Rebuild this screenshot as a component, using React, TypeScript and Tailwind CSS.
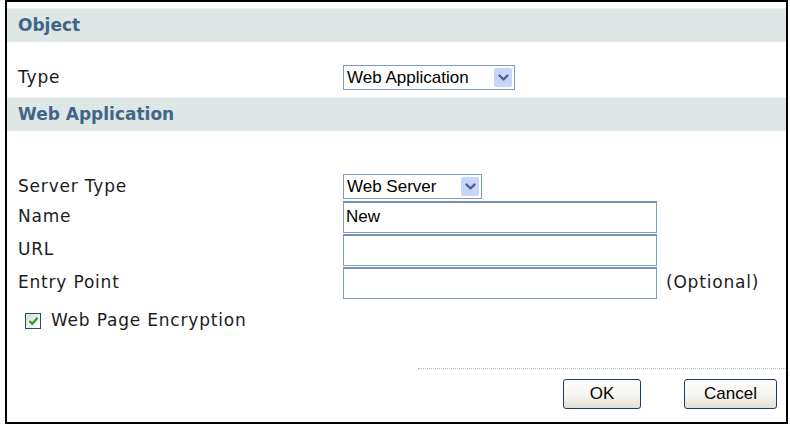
import React from 'react';

const labelFont = "font-['DejaVu_Sans',Verdana,sans-serif] text-[17px] tracking-[0.8px] text-[#1c1c1c]";
const fieldFont = "font-['Liberation_Sans',Arial,sans-serif] text-[17px] text-black";

function Chevron() {
  return (
    <svg width="11" height="8" viewBox="0 0 11 8" fill="none">
      <path d="M1.5 1.5 L5.5 5.5 L9.5 1.5" stroke="#4d6185" strokeWidth="2.4" strokeLinecap="round" strokeLinejoin="round" />
    </svg>
  );
}

function SelectBox({ value, width }: { value: string; width: string }) {
  return (
    <div className={`${width} h-[25px] flex items-center justify-between border border-[#7f9db9] bg-white pl-[3px] pr-[2px]`}>
      <span className={fieldFont}>{value}</span>
      <span className="w-[18px] h-[19px] rounded-[2px] bg-[#c6d6fb] flex items-center justify-center">
        <Chevron />
      </span>
    </div>
  );
}

function TextBox({ value }: { value?: string }) {
  return (
    <div className="w-[314px] h-[32px] flex items-center border border-[#7f9db9] border-t-2 border-t-[#7392b2] bg-white px-[2px]">
      <span className={fieldFont}>{value}</span>
    </div>
  );
}

function Band({ title }: { title: string }) {
  return (
    <div className="h-[34px] flex items-center bg-[#dfe6e6] border-t border-[#eef2f2] pl-[11px]">
      <span className="font-['DejaVu_Sans',Verdana,sans-serif] font-bold text-[17px] text-[#3f6688]">{title}</span>
    </div>
  );
}

function Row({ label, children }: { label: string; children: React.ReactNode }) {
  return (
    <div className="flex items-center">
      <div className={`w-[336px] pl-[11px] ${labelFont}`}>{label}</div>
      {children}
    </div>
  );
}

function XPButton({ text, width }: { text: string; width: string }) {
  return (
    <button className={`${width} h-[30px] rounded-[3px] border border-[#1d3b63] bg-linear-to-b from-white via-[#f6f5f0] to-[#e3e0d3] ${fieldFont}`}>
      {text}
    </button>
  );
}

export default function App() {
  return (
    <div className="w-[790px] h-[426px] bg-white">
      <div className="ml-[5px] w-[783px] h-[424px] border-2 border-black flex flex-col pt-[6px]">
        <Band title="Object" />
        <div className="h-[55px] pt-[23px]">
          <Row label="Type">
            <SelectBox value="Web Application" width="w-[172px]" />
          </Row>
        </div>
        <Band title="Web Application" />
        <div className="flex flex-col pt-[43px]">
          <Row label="Server Type">
            <SelectBox value="Web Server" width="w-[139px]" />
          </Row>
          <div className="flex flex-col gap-[1px] mt-[1px]">
            <Row label="Name">
              <TextBox value="New" />
            </Row>
            <Row label="URL">
              <TextBox />
            </Row>
            <Row label="Entry Point">
              <TextBox />
              <span className={`ml-[9px] ${labelFont}`}>(Optional)</span>
            </Row>
          </div>
          <div className="flex items-center gap-[10px] pl-[18px] h-[44px]">
            <span className="w-[16px] h-[16px] border border-[#1c5180] bg-linear-to-br from-[#dcdcd6] to-white flex items-center justify-center">
              <svg width="11" height="10" viewBox="0 0 11 10" fill="none">
                <path d="M1.5 5 L4.2 7.8 L9.5 1.8" stroke="#21a121" strokeWidth="2.2" />
              </svg>
            </span>
            <span className={labelFont}>Web Page Encryption</span>
          </div>
        </div>
        <div className="mt-auto mb-[13px]">
          <div className="ml-auto w-[368px] border-t border-dotted border-[#b8b8b8]" />
          <div className="flex justify-end gap-[43px] pr-[9px] pt-[10px]">
            <XPButton text="OK" width="w-[78px]" />
            <XPButton text="Cancel" width="w-[93px]" />
          </div>
        </div>
      </div>
    </div>
  );
}
